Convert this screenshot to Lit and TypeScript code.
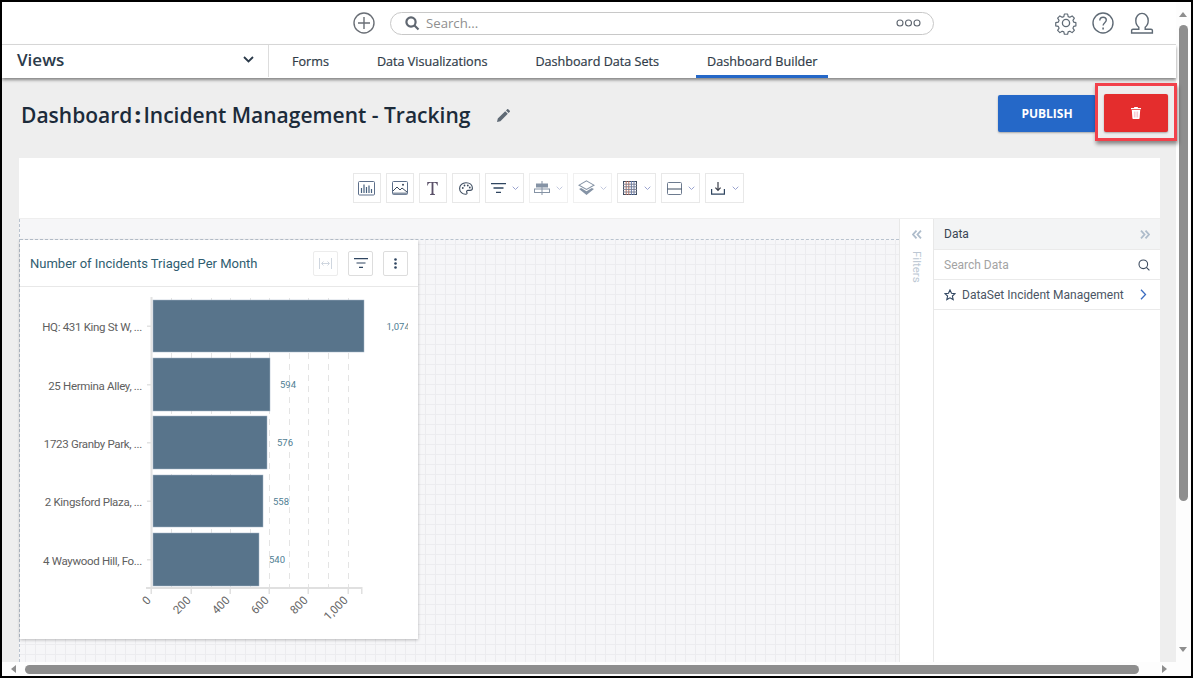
import { LitElement, html, css, svg } from "lit";
import { customElement } from "lit/decorators.js";

const chev = svg`<path d="M.7 .7L3.500 3.500 6.300 .7" fill="none" stroke="currentColor" stroke-width="1"/>`;

const bars = [
  { label: "HQ: 431 King St W, ...", v: "1,074", y: 300, h: 52, w: 211 },
  { label: "25 Hermina Alley, ...", v: "594", y: 358, h: 53, w: 117 },
  { label: "1723 Granby Park, ...", v: "576", y: 416, h: 53, w: 114 },
  { label: "2 Kingsford Plaza, ...", v: "558", y: 475, h: 52, w: 110 },
  { label: "4 Waywood Hill, Fo...", v: "540", y: 533, h: 53, w: 106 },
];
const ticks = [
  { t: "0", x: 151 },
  { t: "200", x: 191 },
  { t: "400", x: 230 },
  { t: "600", x: 269 },
  { t: "800", x: 308 },
  { t: "1,000", x: 348 },
];
const grid = [171, 191, 211, 230, 250, 269, 289, 308, 328, 348];

@customElement("app-root")
export class AppRoot extends LitElement {
  static styles = css`
    :host {
      display: block;
      width: 1193px;
      height: 678px;
      overflow: hidden;
      font-family: "Open Sans", "Noto Sans", sans-serif;
    }
    .frame {
      box-sizing: border-box;
      width: 1193px;
      height: 678px;
      border: 2px solid #000;
      display: grid;
      grid-template-columns: 1174px 15px;
      grid-template-rows: 660px 14px;
      background: #fdfdfd;
    }
    .main {
      display: flex;
      flex-direction: column;
      min-width: 0;
      min-height: 0;
      background: #eee;
    }
    .top {
      height: 43px;
      flex: none;
      box-sizing: border-box;
      background: #fff;
      border-bottom: 1px solid #dcdcdc;
      display: flex;
      align-items: center;
      padding-left: 350px;
    }
    .plus { width: 24px; height: 24px; margin-right: 14px; flex: none; }
    .search {
      box-sizing: border-box;
      width: 544px;
      height: 23px;
      border: 1px solid #c8c8c8;
      border-radius: 12px;
      display: flex;
      align-items: center;
      padding: 0 12px 0 13px;
      gap: 6px;
      color: #8f8f8f;
      font-size: 13.2px;
    }
    .search .grow { flex: 1; }
    .icons { display: flex; gap: 13px; margin-left: 120px; align-items: center; }
    .icons svg { display: block; }
    .icons .user { margin-left: 2px; }
    .nav {
      height: 33px;
      flex: none;
      background: #fff;
      display: flex;
      box-shadow: 0 2px 3px rgba(0, 0, 0, 0.45);
      position: relative;
      z-index: 2;
    }
    .views {
      box-sizing: border-box;
      width: 252px;
      margin-left: 15px;
      flex: none;
      border-right: 1px solid #ddd;
      display: flex;
      align-items: center;
      justify-content: space-between;
      padding-right: 14px;
      font-size: 17px;
      font-weight: 600;
      color: #2b3a4a;
      height: 32px;
      padding-bottom: 3px;
    }
    .tabs { display: flex; gap: 26px; margin-left: 12px; }
    .tab {
      box-sizing: border-box;
      height: 33px;
      padding: 0 11px 1px;
      display: flex;
      align-items: center;
      font-size: 12.6px;
      color: #2f3b48;
      -webkit-text-stroke: 0.2px #2f3b48;
      white-space: nowrap;
    }
    .tab.on { border-bottom: 3px solid #2568c8; padding-top: 3px; }
    .head {
      height: 80px;
      flex: none;
      display: flex;
      align-items: center;
      padding: 0 0 0 19px;
      position: relative;
      z-index: 3;
    }
    h1 {
      margin: 0;
      font-size: 21px;
      font-weight: 600;
      color: #1c2b3a;
      display: flex;
      align-items: center;
      white-space: pre;
      padding-bottom: 7px;
    }
    .colon { font-weight: 800; margin: 0 2.5px; }
    .pen { margin: 0 0 6px 27px; }
    .actions {
      margin-left: auto;
      margin-right: -1px;
      align-self: flex-start;
      margin-top: 5px;
      display: flex;
      align-items: flex-start;
    }
    .publish {
      width: 98px;
      height: 37px;
      margin: 12px -1px 0 0;
      background: #2568c8;
      color: #fff;
      font-size: 12px;
      font-weight: 700;
      display: flex;
      align-items: center;
      justify-content: center;
      border-radius: 2px;
      box-shadow: 0 1px 2px rgba(0, 0, 0, 0.3);
    }
    .hl {
      box-sizing: border-box;
      width: 82px;
      height: 58px;
      border: 3px solid #f2414b;
      box-shadow: 1px 3px 4px rgba(0, 0, 0, 0.45);
      padding: 8px 6px 0 6px;
      background: #eee;
      position: relative;
    }
    .del {
      width: 64px;
      height: 38px;
      background: #e42d2d;
      border-radius: 2px;
      display: flex;
      align-items: center;
      justify-content: center;
      box-shadow: 0 1px 2px rgba(0, 0, 0, 0.3);
    }
    .board { flex: 1; margin: 0 16px 0 17px; display: flex; flex-direction: column; min-height: 0; }
    .toolbar {
      height: 61px;
      flex: none;
      background: #fff;
      border-bottom: 1px solid #eee;
      display: flex;
      align-items: center;
      justify-content: center;
      gap: 5px;
      padding-right: 83px;
      box-sizing: border-box;
    }
    .tb {
      box-sizing: border-box;
      width: 28px;
      height: 30px;
      border: 1px solid #e8e8e8;
      display: flex;
      align-items: center;
      justify-content: center;
    }
    .tb.dd { width: 39px; justify-content: flex-start; padding-left: 4px; }
    .tb.dim { border-color: #f0f0f0; }
    .slot { width: 17px; display: flex; justify-content: center; flex: none; margin-right: 5px; }
    .tb svg { display: block; flex: none; }
    .ch { color: #9aa3cf; }
    .dim .ch { color: #c3c9de; }
    .work { flex: 1; display: flex; min-height: 0; }
    .canvas {
      flex: 1;
      min-width: 0;
      background-color: #f6f6f8;
      background-image: linear-gradient(#ececef 1px, transparent 1px),
        linear-gradient(90deg, #ececef 1px, transparent 1px);
      background-size: 10px 10px;
      background-position: 5px 5px;
      padding-top: 21px;
      border-left: 1px dashed #b9c3cf;
      position: relative;
    }
    .canvas::before {
      content: "";
      position: absolute;
      left: 0;
      right: 0;
      top: 0;
      height: 20px;
      background: #f6f6f8;
      border-bottom: 1px dashed #b9c3cf;
    }
    .card {
      position: relative;
      width: 398px;
      height: 399px;
      background: #fff;
      box-shadow: 0 1px 3px rgba(0, 0, 0, 0.25);
      display: flex;
      flex-direction: column;
    }
    .card-h {
      box-sizing: border-box;
      height: 47px;
      flex: none;
      border-bottom: 1px solid #e8e8e8;
      display: flex;
      align-items: center;
      padding: 0 10px;
      gap: 10px;
      font-family: Roboto, sans-serif;
      font-size: 13px;
      color: #2f5d70;
    }
    .card-h .t { flex: 1; }
    .cb {
      box-sizing: border-box;
      width: 25px;
      height: 25px;
      border: 1px solid #ddd;
      border-radius: 2px;
      display: flex;
      align-items: center;
      justify-content: center;
    }
    .cb.off { border-color: #ececec; }
    .chart { display: block; flex: none; }
    .chart text { font-family: Roboto, sans-serif; }
    .filters {
      box-sizing: border-box;
      width: 35px;
      flex: none;
      background: #fff;
      border-left: 1px solid #e8e8e8;
      border-right: 1px solid #e8e8e8;
      display: flex;
      flex-direction: column;
      align-items: center;
      padding-top: 11px;
      gap: 12px;
    }
    .vt {
      writing-mode: vertical-rl;
      font-family: Roboto, sans-serif;
      font-size: 11.5px;
      color: #bcc7d3;
    }
    .panel {
      width: 226px;
      flex: none;
      background: #fff;
      font-family: Roboto, sans-serif;
      font-size: 12px;
    }
    .row {
      box-sizing: border-box;
      height: 30px;
      display: flex;
      align-items: center;
      justify-content: space-between;
      padding: 0 10px;
      border-bottom: 1px solid #eaeaea;
    }
    .row.h { height: 31px; background: #f3f4f5; color: #3a4654; }
    .row.s { color: #a3a3a3; }
    .row.d { color: #4a5563; justify-content: flex-start; gap: 6px; }
    .row.d .go { margin: 0 3px 0 auto; }
    .vbar { position: relative; background: #fdfdfd; }
    .thumb-v {
      position: absolute;
      left: 3px;
      width: 9px;
      top: 23px;
      height: 476px;
      background: #8e8e8e;
      border-radius: 5px;
    }
    .hbar { grid-column: 1 / 3; position: relative; background: #fdfdfd; }
    .thumb-h {
      position: absolute;
      left: 23px;
      width: 1114px;
      top: 3px;
      height: 9px;
      background: #8e8e8e;
      border-radius: 5px;
    }
    .arr { position: absolute; width: 0; height: 0; border-style: solid; border-color: transparent; }
    .arr.u { left: 3px; top: 10px; border-width: 0 4.5px 5px; border-bottom-color: #8e8e8e; }
    .arr.d { left: 3px; bottom: 10px; border-width: 5px 4.5px 0; border-top-color: #8e8e8e; }
    .arr.l { left: 9px; top: 3px; border-width: 4.5px 5px 4.5px 0; border-right-color: #8e8e8e; }
    .arr.r { left: 1160px; top: 3px; border-width: 4.5px 0 4.5px 5px; border-left-color: #8e8e8e; }
  `;

  private dd(icon: unknown, dim = false) {
    return html`<div class="tb dd ${dim ? "dim" : ""}"><span class="slot">${icon}</span><svg class="ch" width="7" height="5" viewBox="0 0 7 5">${chev}</svg></div>`;
  }

  render() {
    return html`
      <div class="frame">
        <div class="main">
          <div class="top">
            <svg class="plus" viewBox="0 0 24 24" fill="none" stroke="#6a6f76" stroke-width="1.4">
              <circle cx="12" cy="12" r="10"/><path d="M12 6v12M6 12h12"/>
            </svg>
            <div class="search">
              <svg width="16" height="16" viewBox="0 0 16 16" fill="none" stroke="#5f6670" stroke-width="2.2">
                <circle cx="7" cy="7" r="4.6"/><path d="M10.5 10.5l4 4"/>
              </svg>
              <span>Search...</span>
              <span class="grow"></span>
              <svg width="25" height="8" viewBox="0 0 25 8" fill="none" stroke="#5f6670" stroke-width="1.1">
                <circle cx="4" cy="4" r="3"/><circle cx="12.5" cy="4" r="3"/><circle cx="21" cy="4" r="3"/>
              </svg>
            </div>
            <div class="icons">
              <svg width="24" height="24" viewBox="0 0 24 24" fill="none" stroke="#5f6a75" stroke-width="1.3" stroke-linejoin="round">
                <circle cx="12" cy="12" r="3.6"/>
                <path d="M10.2 2h3.6l.6 2.9 1.9.8 2.5-1.6 2.5 2.5-1.6 2.5.8 1.9 2.5.6v3.6l-2.5.6-.8 1.9 1.6 2.5-2.5 2.5-2.5-1.6-1.9.8-.6 2.6h-3.6l-.6-2.6-1.9-.8-2.5 1.6-2.5-2.5 1.6-2.5-.8-1.9-2.9-.6v-3.6l2.9-.6.8-1.9-1.6-2.5 2.5-2.5 2.5 1.6 1.9-.8z" transform="translate(1.2 1.2) scale(.9)"/>
              </svg>
              <svg width="24" height="24" viewBox="0 0 24 24" fill="none" stroke="#5f6a75" stroke-width="1.4">
                <circle cx="12" cy="12" r="10"/>
                <path d="M8.8 9.4c0-2 1.4-3.2 3.3-3.2s3.2 1.2 3.2 2.9c0 2.6-3.2 2.6-3.2 5.4"/>
                <path d="M12.1 16.6v1.8" stroke-width="1.6"/>
              </svg>
              <svg class="user" width="24" height="24" viewBox="0 0 24 24" fill="none" stroke="#5f6a75" stroke-width="1.4">
                <path d="M8.8 16.2C6.8 14.8 5.8 12.4 5.8 9.6 5.8 5.4 8.4 2.4 12 2.4s6.2 3 6.2 7.2c0 2.8-1 5.2-3 6.6v2H21c.8 0 1.4.6 1.4 1.4V22H1.6v-2.4c0-.8.6-1.4 1.4-1.4h5.8z"/>
              </svg>
            </div>
          </div>
          <div class="nav">
            <div class="views">
              <span>Views</span>
              <svg width="11" height="7" viewBox="0 0 11 7" fill="none" stroke="#2b3a4a" stroke-width="1.8"><path d="M1 1l4.5 4.5L10 1"/></svg>
            </div>
            <div class="tabs">
              <div class="tab">Forms</div>
              <div class="tab">Data Visualizations</div>
              <div class="tab">Dashboard Data Sets</div>
              <div class="tab on">Dashboard Builder</div>
            </div>
          </div>
          <div class="head">
            <h1>Dashboard<span class="colon">:</span>Incident Management - Tracking</h1>
            <svg class="pen" width="13" height="13" viewBox="0 0 13 13" fill="#5f6a75">
              <path d="M0 13l.8-3.4 7.4-7.4 2.6 2.6-7.4 7.4zM9 1.4L10.2.2c.3-.3.7-.3 1 0l1.6 1.6c.3.3.3.7 0 1L11.6 4z"/>
            </svg>
            <div class="actions">
              <div class="publish">PUBLISH</div>
              <div class="hl">
                <div class="del">
                  <svg width="10" height="12" viewBox="0 0 10 12">
                    <path d="M3.4 0h3.2l.5 1H10v1.3H0V1h2.9zM.8 3h8.4l-.6 8.2c0 .5-.4.8-.8.8H2.2c-.4 0-.8-.3-.8-.8z" fill="#fff"/>
                    <path d="M3.4 4.5v6M5 4.5v6M6.6 4.5v6" stroke="#f4a9b4" stroke-width=".7"/>
                  </svg>
                </div>
              </div>
            </div>
          </div>
          <div class="board">
            <div class="toolbar">
              <div class="tb">
                <svg width="17" height="15" viewBox="0 0 17 15" fill="none" stroke="#5d6f8a">
                  <rect x=".5" y=".5" width="16" height="13.5" rx="1"/>
                  <path d="M3.5 12V7M6 12V3.5M8.5 12V6M11 12V4.5M13.5 12V8" stroke="#47617f" stroke-width="1.2"/>
                </svg>
              </div>
              <div class="tb">
                <svg width="16" height="14" viewBox="0 0 16 14" fill="none" stroke="#5d6f8a">
                  <rect x=".5" y=".5" width="15" height="13" rx="1"/>
                  <path d="M1 10l4-4 3 3 2-2 5 4" stroke="#3b4a5e"/><circle cx="11" cy="3.8" r="1" fill="#3b4a5e" stroke="none"/>
                  <path d="M1 11.5h14v2H1z" fill="#8a96a6" stroke="none"/>
                </svg>
              </div>
              <div class="tb">
                <svg width="11" height="13" viewBox="0 0 12 14" fill="#5a5068">
                  <path d="M.3 0h11.4v3.6h-.7C10.8 1.8 10 .8 8.2.8H7v11c0 .9.4 1.2 1.6 1.2v1H3.4v-1c1.2 0 1.6-.3 1.6-1.2V.8H3.8C2 .8 1.2 1.8 1 3.6H.3z"/>
                </svg>
              </div>
              <div class="tb">
                <svg width="14" height="13" viewBox="0 0 14 13" fill="none" stroke="#3b4a5e" stroke-width="1.1">
                  <path d="M7 .7C3.3.7.6 3.2.6 6.4c0 3.4 2.9 5.9 6 5.9 1.6 0 1.7-1.1 1.2-1.9-.6-1 .1-2 1.2-2h2c1.500 0 2.400-.9 2.400-2.200C13.400 3 10.800.7 7 .7z"/>
                  <circle cx="3.8" cy="6" r=".9" fill="#3b4a5e" stroke="none"/><circle cx="5.5" cy="3.5" r=".9" fill="#3b4a5e" stroke="none"/><circle cx="8.8" cy="3.5" r=".9" fill="#3b4a5e" stroke="none"/><circle cx="10.8" cy="5.5" r=".9" fill="#3b4a5e" stroke="none"/>
                </svg>
              </div>
              ${this.dd(svg`<svg width="15" height="10" viewBox="0 0 15 10" stroke="#2f4560" stroke-width="1.3"><path d="M0 .7h15M2.5 5h10M5 9.3h5"/></svg>`)}
              ${this.dd(svg`<svg width="16" height="14" viewBox="0 0 16 14" fill="none" stroke="#8593a5"><path d="M8 0v14"/><rect x="2.5" y="3" width="11" height="3" fill="#8593a5"/><rect x=".5" y="8" width="15" height="3.5"/></svg>`, true)}
              ${this.dd(svg`<svg width="17" height="16" viewBox="0 0 16 15"><path d="M8 .8l7 4-7 4-7-4z" fill="none" stroke="#8593a5"/><path d="M1 8.500l7 5.500 7-5.500-2-1-5 3-5-3z" fill="#8593a5"/></svg>`, true)}
              ${this.dd(svg`<svg width="14" height="14" viewBox="0 0 14 14" fill="none"><rect x=".5" y=".5" width="13" height="13" stroke="#3b4a5e"/><path d="M3.2 0v14M5.8 0v14" stroke="#c0705a"/><path d="M8.4 0v14M11 0v14" stroke="#6a7fb0"/><path d="M0 3.2h14M0 5.8h14M0 8.4h14M0 11h14" stroke="#7a7f90"/></svg>`)}
              ${this.dd(svg`<svg width="15" height="13" viewBox="0 0 15 13" fill="none" stroke="#6d7b8f"><rect x=".5" y=".5" width="14" height="12" rx="1"/><path d="M.5 7h14" stroke="#3b4a5e"/></svg>`)}
              ${this.dd(svg`<svg width="14" height="13" viewBox="0 0 14 13" fill="none" stroke="#2f4560" stroke-width="1.2"><path d="M.6 7v5.200h12.800V7"/><path d="M7 0v8M4.400 5.600L7 8.400l2.600-2.800" stroke="#3b3f4a"/></svg>`)}
            </div>
            <div class="work">
              <div class="canvas">
                <div class="card">
                  <div class="card-h">
                    <span class="t">Number of Incidents Triaged Per Month</span>
                    <div class="cb off">
                      <svg width="13" height="11" viewBox="0 0 13 11" fill="none" stroke="#cfd6df"><path d="M.5 0v11M12.5 0v11M3 5.500h7"/><path d="M4.500 3.500l-2 2 2 2M8.500 3.500l2 2-2 2"/></svg>
                    </div>
                    <div class="cb">
                      <svg width="14" height="10" viewBox="0 0 14 10" stroke="#2f4560" stroke-width="1.2"><path d="M0 .7h14M2.500 5h9M5 9.300h4"/></svg>
                    </div>
                    <div class="cb">
                      <svg width="3" height="11" viewBox="0 0 3 11" fill="#2f4560"><circle cx="1.5" cy="1.5" r="1.3"/><circle cx="1.5" cy="5.5" r="1.3"/><circle cx="1.5" cy="9.5" r="1.3"/></svg>
                    </div>
                  </div>
                  <svg class="chart" width="398" height="352" viewBox="20 287 398 352">
                    <defs><clipPath id="c"><rect x="20" y="287" width="388" height="352"/></clipPath></defs>
                    ${grid.map((x) => svg`<line x1=${x + 0.5} x2=${x + 0.5} y1="298" y2="587" stroke="#e4e4e4" stroke-dasharray="6 5"/>`)}
                    <rect x="150.5" y="297" width="2" height="291" fill="#e2e2e2"/>
                    ${bars.map(
                      (b) => svg`
                      <rect x="147" y=${b.y + b.h / 2 - 0.5} width="4" height="1.5" fill="#e2e2e2"/>
                      <rect x="153" y=${b.y} width=${b.w} height=${b.h} fill="#58748b" stroke="#a3b5c5" stroke-width=".5"/>
                      <text x="142" y=${b.y + b.h / 2 + 5} text-anchor="end" font-size="11.5" letter-spacing="-.32" fill="#606060">${b.label}</text>
                      <text x=${b.w + 153 + (b.w > 200 ? 22.5 : 10)} y=${b.y + b.h / 2 + 3.5} font-size="9.5" fill="#4f7e93" clip-path="url(#c)">${b.v}</text>
                    `
                    )}
                    <rect x="146" y="587" width="216" height="2" fill="#e0e0e0"/>
                    <rect x="361" y="587" width="1.5" height="7" fill="#e0e0e0"/>
                    ${ticks.map(
                      (t) => svg`
                      <rect x=${t.x - 0.5} y="587" width="1.5" height="7" fill="#e0e0e0"/>
                      <text transform="translate(${t.x + 0.5} 601) rotate(-45)" text-anchor="end" font-size="11.5" fill="#666">${t.t}</text>
                    `
                    )}
                  </svg>
                </div>
              </div>
              <div class="filters">
                <svg width="10" height="9" viewBox="0 0 10 9" fill="none" stroke="#aebccb" stroke-width="1.8"><path d="M4.500 .7L1 4.500l3.500 3.800M9 .7L5.500 4.500 9 8.300"/></svg>
                <span class="vt">Filters</span>
              </div>
              <div class="panel">
                <div class="row h">
                  <span>Data</span>
                  <svg width="10" height="9" viewBox="0 0 10 9" fill="none" stroke="#aebccb" stroke-width="1.8"><path d="M1 .7l3.500 3.800L1 8.300M5.500 .7L9 4.500 5.500 8.300"/></svg>
                </div>
                <div class="row s">
                  <span>Search Data</span>
                  <svg width="12" height="12" viewBox="0 0 12 12" fill="none" stroke="#3b4a5e" stroke-width="1.1"><circle cx="5.3" cy="5.3" r="4.3"/><path d="M8.4 8.4l3 3"/></svg>
                </div>
                <div class="row d">
                  <svg width="12" height="12" viewBox="0 0 12 12" fill="none" stroke="#2f4560" stroke-width="1.1"><path d="M6 .9l1.500 3.300 3.600.4-2.700 2.400.8 3.600L6 8.800l-3.200 1.800.8-3.600L.9 4.600l3.600-.4z"/></svg>
                  <span>DataSet Incident Management</span>
                  <svg class="go" width="7" height="11" viewBox="0 0 7 11" fill="none" stroke="#3b6cc0" stroke-width="1.3"><path d="M1 .7l4.500 4.800L1 10.300"/></svg>
                </div>
              </div>
            </div>
          </div>
        </div>
        <div class="vbar">
          <div class="arr u"></div>
          <div class="thumb-v"></div>
          <div class="arr d"></div>
        </div>
        <div class="hbar">
          <div class="arr l"></div>
          <div class="thumb-h"></div>
          <div class="arr r"></div>
        </div>
      </div>
    `;
  }
}
